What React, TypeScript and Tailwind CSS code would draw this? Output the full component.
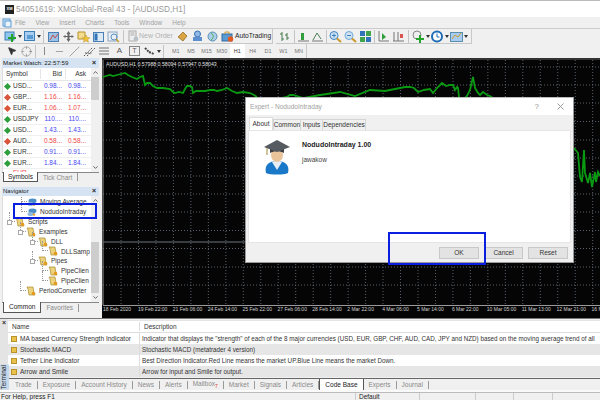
import { ChevronDown, ChevronUp, Crosshair, Minus, MousePointer2, Slash } from "lucide-react";

const font = { fontFamily: '"Liberation Sans", Arial, sans-serif' };

const greenLeft = "103,77 106,76 110,75 113,76 117,75 121,74 125,73 128,75 132,77 137,79 140,77 143,76 145,85 147,83 150,83 153,86 157,88 163,88 170,89 173,92 175,93 179,92 183,93 185,89 187,86 190,86 192,87 193,93 196,91 200,91 205,91 210,90 214,90 217,91 222,90 227,88 232,91 237,93 243,92 250,93 254,95 257,97";
const greenMid = "282,98 287,97 290,95 293,95 297,96 300,97 304,98 320,95 340,92 355,96 370,90 385,91 400,88 405,87 410,87 414,88 418,92 424,90 430,89 433,93 437,88 442,83 446,86 450,85 453,85 455,90 457,87 458,88 459,97";
const greenRight = "465,98 467,96 470,90 473,77 475,88 478,93 480,95 483,92 487,95 490,96 493,98";
const greenFar = "574,148 578,153 580,177 582,182 584,150 585,173 588,183 590,173 592,187 595,172 596,182 598,172 600,176";

const hLines = [67, 85, 103, 121.5, 140, 158, 176, 194, 212, 230.5, 248.5, 267, 285];
const vLines = Array.from({ length: 28 }, (_, i) => 121 + i * 17.47);

const timeLabels = ["18 Feb 2020", "19 Feb 22:00", "21 Feb 06:00", "24 Feb 14:00", "25 Feb 22:00", "27 Feb 06:00", "28 Feb 14:00", "2 Mar 22:00", "4 Mar 06:00", "5 Mar 14:00", "6 Mar 22:00", "10 Mar 05:00", "11 Mar 13:00", "12 Mar 21:00", "16 M"];

const quotes = [
  ["USD...", "0.98...", "0.98...", "up"],
  ["GBP...", "1.16...", "1.16...", "down"],
  ["EUR...", "1.06...", "1.07...", "down"],
  ["USDJPY", "110....", "110....", "up"],
  ["USD...", "1.43...", "1.43...", "up"],
  ["AUD...", "0.58...", "0.58...", "down"],
  ["EUR...", "0.91...", "0.91...", "up"],
  ["EUR...", "1.84...", "1.84...", "up"],
];

const codeBase = [
  ["MA based Currency Strength Indicator", 'Indicator that displays the "strength" of each of the 8 major currencies (USD, EUR, GBP, CHF, AUD, CAD, JPY and NZD) based on the moving average trend of all'],
  ["Stochastic MACD", "Stochastic MACD (metatrader 4 version)"],
  ["Tether Line Indicator", "Best Direction Indicator.Red Line means the market UP.Blue Line means the market Down."],
  ["Arrow and Smile", "Arrow for input and Smile for output."],
];

function Sep({ tight }: { tight?: boolean }) {
  return <div className={`w-px h-[13px] bg-[#c4c4c4] shrink-0 ${tight ? "mx-[1px]" : "mx-[2px]"}`} />;
}

function Ico({ children, w = 15 }: { children: React.ReactNode; w?: number }) {
  return (
    <svg width={w} height="13" viewBox={`0 0 ${w} 13`} className="shrink-0">
      {children}
    </svg>
  );
}

function Scroll({ chart }: { chart?: boolean }) {
  return (
    <Ico>
      <rect x="2.5" y="2.5" width="10" height="9" fill={chart ? "#9cc3e6" : "#dbe8f5"} stroke="#4a7fb5" />
      {chart ? <path d="M4 10 L7 5 L9 8 L12 4" stroke="#c0504d" fill="none" /> : <rect x="3.5" y="3.5" width="3" height="7" fill="#2f74b8" />}
    </Ico>
  );
}

function Plus({ x, y }: { x: number; y: number }) {
  return <path d={`M${x} ${y - 3}h2v3h3v2h-3v3h-2v-3h-3v-2h3z`} fill="#22a32a" />;
}

function Caret() {
  return (
    <span className="w-[4px] flex justify-center shrink-0">
      <span className="w-0 h-0 border-x-[2px] border-x-transparent border-t-[3px] border-t-[#333]" />
    </span>
  );
}

function Cell({ children }: { children: React.ReactNode }) {
  return <div className="w-[15px] flex justify-center items-center shrink-0">{children}</div>;
}

function Scholar() {
  return (
    <svg width="26" height="36" viewBox="0 0 26 36" className="shrink-0">
      <path d="M2 34 C0 26 5 22 13 22 C21 22 26 26 24 34 C20 36 6 36 2 34 Z" fill="#1a78c8" />
      <path d="M8 23 L13 31 L18 23 L13 21 Z" fill="#e8eef5" />
      <ellipse cx="13" cy="16" rx="6" ry="7" fill="#e9c49a" />
      <path d="M6 9 H20 V14 C16 11.5 10 11.5 6 14 Z" fill="#3a3e43" />
      <path d="M0 8 L13 1 L26 8 L13 13 Z" fill="#565b61" />
      <path d="M3 9 V16" stroke="#a08a3a" strokeWidth="1" />
    </svg>
  );
}

function Scripty() {
  return (
    <svg width="10" height="10" viewBox="0 0 10 10" className="shrink-0">
      <path d="M1 1 H7 L8 7 L9 9 H3 L2 3 Z" fill="#ecd27a" stroke="#a98a2f" strokeWidth="0.7" />
      <circle cx="7.5" cy="7.5" r="1.8" fill="#e39a1e" />
    </svg>
  );
}

function Cloudy() {
  return (
    <svg width="10" height="10" viewBox="0 0 10 10" className="shrink-0">
      <ellipse cx="5.5" cy="4" rx="4" ry="2.4" fill="#4b8fc9" />
      <ellipse cx="3.5" cy="7" rx="3" ry="2" fill="#8fb9dc" />
      <circle cx="7" cy="7.5" r="1.3" fill="#d6a23a" />
    </svg>
  );
}

function NavRow({ indent, label, icon, box }: { indent: number; label: string; icon: "script" | "cloud"; box?: boolean }) {
  return (
    <div className="relative h-[9.9px] flex items-center gap-[3px] whitespace-nowrap" style={{ paddingLeft: indent }}>
      <span className="absolute w-[6px] h-[10px] border-l border-b border-dotted border-[#999]" style={{ left: indent - 6, top: -5 }} />
      {box && <span className="absolute w-[5px] h-[5px] border border-[#aaa] bg-white" style={{ left: indent - 8, top: 3 }} />}
      {icon === "script" ? <Scripty /> : <Cloudy />}
      <span>{label}</span>
    </div>
  );
}

function TermTab({ label, badge, active }: { label: string; badge?: boolean; active?: boolean }) {
  if (active)
    return <div className="h-[12px] px-[5px] -mt-[1px] bg-white border border-[#555] border-t-0 text-[#222] flex items-center">{label}</div>;
  return (
    <div className="flex items-center h-[10px]">
      <span className="px-[5px] text-[#8a8a8a]">{label}{badge && <span className="text-[#e0362c] text-[5px] align-sub">7</span>}</span>
      <span className="w-px h-[8px] bg-[#9a9a9a]" />
    </div>
  );
}

function DlgBtn({ label, w }: { label: string; w: string }) {
  return <div className={`${w} h-[12px] bg-[#e3e3e3] border border-[#c8c8c8] flex items-center justify-center text-[#333]`}>{label}</div>;
}

export default function App() {
  return (
    <div className="w-[600px] h-[400px] overflow-hidden bg-[#f0f0f0] flex flex-col text-[6.5px] text-[#333] relative" style={font}>
      {/* title */}
      <div className="h-[17px] bg-white border-t border-[#bbb] flex items-center pl-[5px] gap-[2px] text-[8.3px] text-[#9a9a9a] shrink-0">
        <div className="w-[9px] h-[9px] bg-[#222] text-white text-[4px] font-bold flex items-center justify-center">XM</div>
        <span>54051619: XMGlobal-Real 43 - [AUDUSD,H1]</span>
      </div>
      {/* menu */}
      <div className="h-[11px] bg-[#f0f0f0] flex items-center pl-[2px] text-[6.45px] text-[#a0a0a0] shrink-0">
        <svg width="10" height="10" viewBox="0 0 10 10" className="mr-[3px]"><rect x="1" y="1" width="7" height="7" fill="#cfe2f3" stroke="#5b9bd5" /><rect x="3" y="3" width="6" height="6" fill="#eaf2fa" stroke="#5b9bd5" /></svg>
        <div className="flex gap-[10px]">
          <span>File</span><span>View</span><span>Insert</span><span>Charts</span><span>Tools</span><span>Window</span><span>Help</span>
        </div>
      </div>
      {/* toolbar 1 */}
      <div className="h-[16px] border-t border-[#ccc] flex shrink-0 items-center">
        <div className="flex items-center h-[15px] pl-[3px] border-r border-b border-[#c8c8c8] w-[273px] shrink-0">
          <Ico><rect x="2" y="2" width="9" height="8" fill="#8ec6f0" stroke="#3b7fb6" /><Plus x={8} y={7} /></Ico>
          <Caret />
          <Ico><rect x="2.5" y="1.5" width="10" height="9" fill="#a8cdf0" stroke="#3b7fb6" /><rect x="5" y="5" width="6" height="4" fill="#5b9bd5" /></Ico>
          <Caret />
          <Sep />
          <Scroll chart />
          <Ico><path d="M7.5 1 L9.5 4 H8.5 V6 H10.5 V5 L13 6.5 L10.5 8 V7 H8.5 V9 H9.5 L7.5 12 L5.5 9 H6.5 V7 H4.5 V8 L2 6.5 L4.5 5 V6 H6.5 V4 H5.5 Z" fill="#666" /></Ico>
          <Ico><path d="M2 2 H9 V9 H2 Z" fill="#f4dc8e" stroke="#b8912e" /><path d="M10 5 l1.2 2.5 2.6 .3 -2 1.8 .6 2.6 -2.4 -1.4 -2.4 1.4 .6 -2.6 -2 -1.8 2.6 -.3 z" fill="#f1c232" stroke="#b8912e" strokeWidth=".5" /></Ico>
          <Scroll />
          <Ico><rect x="2" y="2" width="9" height="9" fill="#e8eef5" stroke="#8aa5bf" /><circle cx="8" cy="7" r="3" fill="none" stroke="#5b8fc0" /><path d="M10 9 L13 12" stroke="#c99a2e" strokeWidth="1.5" /></Ico>
          <Sep />
          <Ico w={13}><rect x="3" y="1" width="7" height="10" fill="#eee" stroke="#aaa" /><path d="M4.5 3 H8.5 M4.5 5 H8.5" stroke="#aaa" /><circle cx="10" cy="9" r="2.4" fill="#b8c0c8" /></Ico>
          <span className="text-[#b0b0b0] text-[7px] w-[33px] whitespace-nowrap">New Order</span>
          <div className="w-[3px]" />
          <Ico><path d="M3 7 L8 2 L12 6 L8 11 Z" fill="#d9a441" stroke="#8a6420" strokeWidth=".7" /></Ico>
          <Ico><circle cx="7.5" cy="4" r="3" fill="#8fb9e8" stroke="#3a6fb0" /><rect x="3" y="7" width="9" height="4" fill="#5b8fd0" /></Ico>
          <Ico><circle cx="7.5" cy="6.5" r="4.5" fill="#a9cdea" stroke="#5b8fb0" /><path d="M6 3 C9 5 9 8 6 10" stroke="#4caf50" fill="none" /></Ico>
          <Ico><rect x="2" y="4" width="10" height="7" fill="#5b9bd5" stroke="#35699c" /><path d="M5 4 V2 H9 V4" stroke="#c99a2e" fill="none" /><circle cx="10.5" cy="9" r="2.7" fill="#e45b1f" /></Ico>
          <span className="text-[#222] text-[6.7px] whitespace-nowrap">AutoTrading</span>
        </div>
        <div className="flex items-center h-[15px] pl-[3px] border-r border-b border-[#c8c8c8] ml-[3px] w-[196px] shrink-0">
          <Ico w={13}><path d="M3 2 V11 M3 4 H1 M3 9 H5 M8 3 V10 M8 5 H6 M8 8 H10" stroke="#477a4a" fill="none" /></Ico>
          <Sep />
          <Ico w={13}><path d="M1 11 H12" stroke="#777" /><rect x="4" y="3" width="3" height="7" fill="#2f9e3c" /></Ico>
          <Ico><path d="M2 11 H13" stroke="#777" /><path d="M3 10 L7 3 L11 9" stroke="#4d7f55" fill="none" /></Ico>
          <Sep tight />
          <Ico><circle cx="6" cy="5.5" r="4" fill="#cfe2f3" stroke="#3f84c2" /><path d="M9 8.5 L13 12" stroke="#c99a2e" strokeWidth="2" /><path d="M4 5.5 H8 M6 3.5 V7.5" stroke="#3f84c2" /></Ico>
          <Ico><circle cx="6" cy="5.5" r="4" fill="#cfe2f3" stroke="#6fa8d6" /><path d="M9 8.5 L13 12" stroke="#c99a2e" strokeWidth="2" /><path d="M4 5.5 H8" stroke="#3f84c2" /></Ico>
          <Ico><rect x="2" y="1" width="5" height="5" fill="#2f74b8" /><rect x="8" y="1" width="5" height="5" fill="#3fa34d" /><rect x="2" y="7" width="5" height="5" fill="#3fa34d" /><rect x="8" y="7" width="5" height="5" fill="#2f74b8" /></Ico>
          <Sep tight />
          <Ico><path d="M3 1 V11 H13" stroke="#777" fill="none" /><path d="M6 3 L10 7 L6 10 Z" fill="#2f9e3c" /></Ico>
          <Ico><path d="M3 2 V11 M7 2 V11 M2 11 H13" stroke="#777" fill="none" /><rect x="9" y="4" width="3" height="4" fill="#d9534f" /></Ico>
          <Sep />
          <Ico><circle cx="6" cy="5" r="4" fill="#eee" stroke="#888" /><Plus x={8} y={8} /></Ico>
          <Caret />
          <Ico><circle cx="7" cy="6.5" r="5" fill="#fff" stroke="#1f6eb5" strokeWidth="2" /><path d="M7 3.5 V7 H9.5" stroke="#1f6eb5" fill="none" /></Ico>
          <Caret />
          <Ico><rect x="1.5" y="2.5" width="12" height="9" fill="#a8cdf0" stroke="#5b8fb0" /><path d="M3 9 L6 5 L9 7 L12 3" stroke="#c99a2e" fill="none" /></Ico>
          <Caret />
        </div>
      </div>
      {/* toolbar 2 */}
      <div className="h-[14px] flex shrink-0 items-center">
        <div className="flex items-center h-[14px] pl-[4px] border-r border-[#c8c8c8] w-[307px] text-[#777]">
          <Cell><MousePointer2 size={10} className="fill-[#333] text-[#333]" /></Cell>
          <Cell><Crosshair size={11} className="text-[#666]" strokeWidth={1} /></Cell>
          <Sep tight />
          <Cell><div className="w-px h-[8px] bg-[#888]" /></Cell>
          <Cell><Minus size={11} className="text-[#666]" strokeWidth={1.2} /></Cell>
          <Cell><Slash size={11} className="text-[#666]" strokeWidth={1.2} /></Cell>
          <Ico><path d="M2 11 L10 3 M5 11 L13 3 M3 8 L10 8" stroke="#555" strokeDasharray="1.5 1" /></Ico>
          <Ico><path d="M2 3 H12 M2 6 H12 M2 9 H12" stroke="#777" /></Ico>
          <Cell><span className="text-[8px] text-[#555]">A</span></Cell>
          <Cell><div className="w-[11px] h-[10px] border border-[#888] flex items-center justify-center text-[6.5px] text-[#555]">T</div></Cell>
          <Ico><path d="M3 3 L7 7 M7 7 L12 9" stroke="#444" strokeWidth="2" strokeDasharray="2 1" /></Ico>
          <Caret />
          <Sep />
          <div className="flex ml-[2px]">
            {["M1", "M5", "M15", "M30", "H1", "H4", "D1", "W1", "MN"].map((t) => (
              <span key={t} className={`w-[15.4px] text-center text-[5.5px] leading-[14px] ${t === "H1" ? "bg-white text-[#333]" : "text-[#777]"}`}>{t}</span>
            ))}
          </div>
        </div>
      </div>

      {/* middle */}
      <div className="h-[260px] flex shrink-0">
        {/* left */}
        <div className="w-[102px] flex flex-col shrink-0">
          <div className="h-[124px] flex flex-col shrink-0 pl-[2px] pr-[3px]">
            <div className="h-[10px] bg-[#d5e3f2] flex items-center justify-between px-[1px] text-[6.2px] text-[#222] shrink-0">
              <span>Market Watch: 22:57:59</span>
              <span className="text-[7px] font-bold pr-[2px]">×</span>
            </div>
            <div className="h-[104px] flex bg-white overflow-hidden border-l border-[#ddd] shrink-0">
              <div className="flex-1 overflow-hidden">
                <div className="h-[13px] flex items-center border-b border-[#e5e5e5]">
                  <span className="w-[37px] pl-[3px]">Symbol</span>
                  <span className="w-[25px] text-right pr-[3px] border-l border-[#e5e5e5]">Bid</span>
                  <span className="w-[25px] text-right pr-[4px] border-l border-[#e5e5e5]">Ask</span>
                </div>
                {quotes.map((q, i) => (
                  <div key={i} className="h-[11px] flex items-center border-b border-[#f0f0f0]">
                    <span className="w-[37px] flex items-center pl-[2px] gap-[3px]">
                      <span className={`w-[5px] h-[5px] shrink-0 rotate-45 ${q[3] === "up" ? "bg-[#2f9e3c]" : "bg-[#d9543a]"}`} />
                      <span>{q[0]}</span>
                    </span>
                    <span className={`w-[25px] text-right pr-[3px] ${q[3] === "up" ? "text-[#4646ef]" : "text-[#ef4646]"}`}>{q[1]}</span>
                    <span className={`w-[25px] text-right pr-[4px] ${q[3] === "up" ? "text-[#4646ef]" : "text-[#ef4646]"}`}>{q[2]}</span>
                  </div>
                ))}
                <div className="h-[3px] pl-[10px] text-[#ef4646] overflow-hidden leading-[8px]">EUR...</div>
              </div>
              <div className="w-[8px] bg-[#f0f0f0] flex flex-col shrink-0">
                <div className="h-[9px] flex items-center justify-center"><ChevronUp size={7} strokeWidth={2.5} /></div>
                <div className="h-[23px] bg-[#cdcdcd]" />
                <div className="flex-1" />
                <div className="h-[9px] flex items-center justify-center"><ChevronDown size={7} strokeWidth={2.5} /></div>
              </div>
            </div>
            <div className="h-[10px] flex items-start shrink-0 border-t border-[#888]">
              <div className="h-[10px] -mt-[1px] ml-[1px] px-[4px] bg-white border-x border-b border-[#555] flex items-center text-[#222]">Symbols</div>
              <span className="px-[5px] text-[#8a8a8a] leading-[9px]">Tick Chart</span>
              <span className="w-px h-[8px] bg-[#999]" />
            </div>
          </div>
          <div className="h-[5px] shrink-0" />
          <div className="flex-1 flex flex-col pl-[2px] pr-[3px] overflow-hidden">
            <div className="h-[9px] bg-[#d5e3f2] flex items-center justify-between px-[1px] text-[6px] text-[#222] shrink-0">
              <span>Navigator</span>
              <span className="text-[7px] font-bold pr-[2px]">×</span>
            </div>
            <div className="h-[106px] flex bg-white overflow-hidden border-l border-[#ddd] shrink-0">
              <div className="flex-1 overflow-hidden pt-[1px]">
                <NavRow indent={24} label="Moving Average" icon="cloud" />
                <NavRow indent={24} label="NodudoIntraday" icon="cloud" />
                <NavRow indent={12} label="Scripts" icon="script" box />
                <NavRow indent={23} label="Examples" icon="script" box />
                <NavRow indent={35} label="DLL" icon="script" box />
                <NavRow indent={45} label="DLLSamp" icon="script" />
                <NavRow indent={35} label="Pipes" icon="script" box />
                <NavRow indent={45} label="PipeClien" icon="script" />
                <NavRow indent={45} label="PipeClien" icon="script" />
                <NavRow indent={23} label="PeriodConverter" icon="script" />
              </div>
              <div className="w-[8px] bg-[#f0f0f0] flex flex-col shrink-0">
                <div className="h-[9px] flex items-center justify-center"><ChevronUp size={7} strokeWidth={2.5} /></div>
                <div className="h-[37px]" />
                <div className="flex-1 bg-[#cdcdcd]" />
                <div className="h-[9px] flex items-center justify-center"><ChevronDown size={7} strokeWidth={2.5} /></div>
              </div>
            </div>
            <div className="h-[15px] flex items-start shrink-0 border-t border-[#888]">
              <div className="h-[11px] -mt-[1px] ml-[1px] px-[5px] bg-white border-x border-b border-[#555] flex items-center text-[#222]">Common</div>
              <span className="px-[5px] text-[#8a8a8a] leading-[10px]">Favorites</span>
              <span className="w-px h-[8px] bg-[#999] mt-[1px]" />
            </div>
          </div>
        </div>

        {/* chart */}
        <div className="flex-1 relative bg-[#050505] border-t-2 border-[#333] flex flex-col justify-end text-[#cfcfcf] overflow-hidden">
          <svg width="498" height="258" viewBox="102 60 498 258" className="absolute left-0 top-0">
            {hLines.map((y) => (
              <line key={y} x1="103" x2="600" y1={y} y2={y} stroke="#6f7a87" strokeWidth="0.8" strokeDasharray="1 2" />
            ))}
            {vLines.map((x) => (
              <line key={x} x1={x} x2={x} y1="60" y2="305" stroke="#6f7a87" strokeWidth="0.8" strokeDasharray="1 2" />
            ))}
            <line x1="103" x2="103" y1="60" y2="305" stroke="#9a9a9a" />
            <line x1="103" x2="600" y1="305.5" y2="305.5" stroke="#9a9a9a" />
            <line x1="103" x2="246" y1="242" y2="242" stroke="#6d7780" />
            {[greenLeft, greenMid, greenRight, greenFar].map((p) => (
              <polyline key={p} points={p} fill="none" stroke="#0a9a12" strokeWidth="1.8" />
            ))}
          </svg>
          <div className="absolute left-[4px] top-[1px] text-[5.2px] text-[#e0e0e0] whitespace-nowrap">AUDUSD,H1  0.57988 0.58094 0.57947 0.58043</div>
          <div className="relative h-[13px] flex pl-[1px] text-[5px] leading-[9px] whitespace-nowrap">
            {timeLabels.map((t) => (
              <span key={t} className="w-[34.9px] shrink-0">{t}</span>
            ))}
          </div>
        </div>
      </div>

      {/* terminal */}
      <div className="flex-1 flex flex-col border-t border-[#777] min-h-0">
        <div className="h-[71px] flex shrink-0">
          <div className="w-[8px] flex flex-col items-center shrink-0 bg-[#e4e4e4]">
            <span className="text-[7px] font-bold leading-[8px]">×</span>
            <div className="flex-1" />
            <span className="[writing-mode:vertical-rl] rotate-180 text-[6.5px] text-[#222] bg-[#c5d7ea] leading-[8px] py-[1px]">Terminal</span>
          </div>
          <div className="flex-1 flex flex-col min-w-0">
            <div className="h-[13px] flex items-center bg-white border-b border-[#ddd] border-t mt-[1px] border-t-[#e5e5e5] shrink-0">
              <span className="w-[132px] pl-[4px] border-r border-[#ddd]">Name</span>
              <span className="pl-[4px]">Description</span>
            </div>
            {codeBase.map(([n, d], i) => (
              <div key={n} className={`h-[11px] flex items-center whitespace-nowrap shrink-0 ${i % 2 ? "bg-[#e6e6e6]" : "bg-white"}`}>
                <span className="w-[132px] pl-[3px] flex items-center gap-[3px] border-r border-[#ddd] h-full text-[6.55px]">
                  <span className="w-[6px] h-[6px] bg-[#e8c24a] border border-[#b9922e]" />
                  {n}
                </span>
                <span className="pl-[2px] overflow-hidden flex-1 text-[6.3px]">{d}</span>
              </div>
            ))}
            <div className="h-[1px] bg-[#666] mt-[1px] shrink-0" />
            <div className="h-[13px] flex items-start pl-[2px] pt-[1px] shrink-0">
              {["Trade", "Exposure", "Account History", "News", "Alerts"].map((t) => <TermTab key={t} label={t} />)}
              <TermTab label="Mailbox" badge />
              {["Market", "Signals", "Articles"].map((t) => <TermTab key={t} label={t} />)}
              <TermTab label="Code Base" active />
              {["Experts", "Journal"].map((t) => <TermTab key={t} label={t} />)}
            </div>
          </div>
        </div>
        <div className="h-[2px] bg-[#fafafa] shrink-0" />
        <div className="flex-1 flex items-center border-t border-[#bbb] text-[#222] leading-[8px]">
          <span className="w-[355px] pl-[1px] shrink-0">For Help, press F1</span>
          <span className="w-[64px] pl-[3px] border-l border-[#ccc] shrink-0">Default</span>
          <span className="w-[56px] h-full border-l border-[#ccc]" />
          <span className="w-[38px] h-full border-l border-[#ccc]" />
          <span className="w-[39px] h-full border-l border-[#ccc]" />
          <span className="w-[38px] h-full border-l border-[#ccc]" />
        </div>
      </div>

      {/* dialog */}
      <div className="absolute left-[245px] top-[97px] w-[329px] h-[166px] bg-[#f0f0f0] border border-[#9a9a9a] border-t-[#bbb] flex flex-col px-[2px]">
        <div className="h-[17px] mx-[-2px] bg-white flex items-center justify-between px-[4px] text-[6.6px] text-[#a0a0a0] shrink-0">
          <span>Expert - NodudoIntraday</span>
          <div className="flex items-center gap-[18px] pr-[5px] text-[#999]">
            <span className="text-[8px]">?</span>
            <svg width="7" height="7" viewBox="0 0 7 7"><path d="M0.5 0.5 L6.5 6.5 M6.5 0.5 L0.5 6.5" stroke="#999" /></svg>
          </div>
        </div>
        <div className="h-[15px] flex items-end pl-[1px] shrink-0">
          <div className="h-[13px] w-[24px] bg-white border border-b-0 border-[#ddd] flex items-center justify-center">About</div>
          <div className="h-[11px] w-[28px] bg-[#f0f0f0] border border-b-0 border-[#d5d5d5] flex items-center justify-center">Common</div>
          <div className="h-[11px] w-[22px] bg-[#f0f0f0] border border-b-0 border-l-0 border-[#d5d5d5] flex items-center justify-center">Inputs</div>
          <div className="h-[11px] w-[43px] bg-[#f0f0f0] border border-b-0 border-l-0 border-[#d5d5d5] flex items-center justify-center">Dependencies</div>
        </div>
        <div className="h-[113px] bg-white flex gap-[12px] pl-[15px] pt-[8px] shrink-0 border border-[#e5e5e5]">
          <Scholar />
          <div className="flex flex-col gap-[5px]">
            <span className="font-bold text-[7px] text-[#222] leading-[11px]">NodudoIntraday 1.00</span>
            <span className="text-[#444] leading-[9px]">jawakow</span>
          </div>
        </div>
        <div className="flex-1 flex items-center justify-end gap-[5px] pr-[3px]">
          <DlgBtn label="OK" w="w-[40px]" />
          <DlgBtn label="Cancel" w="w-[39px]" />
          <DlgBtn label="Reset" w="w-[40px]" />
        </div>
      </div>

      {/* blue annotation boxes */}
      <div className="absolute left-[388px] top-[232px] w-[98px] h-[33px] border-2 border-[#0a1fe0]" />
      <div className="absolute left-[13px] top-[203px] w-[84px] h-[16px] border-2 border-[#0a1fe0]" />
    </div>
  );
}
